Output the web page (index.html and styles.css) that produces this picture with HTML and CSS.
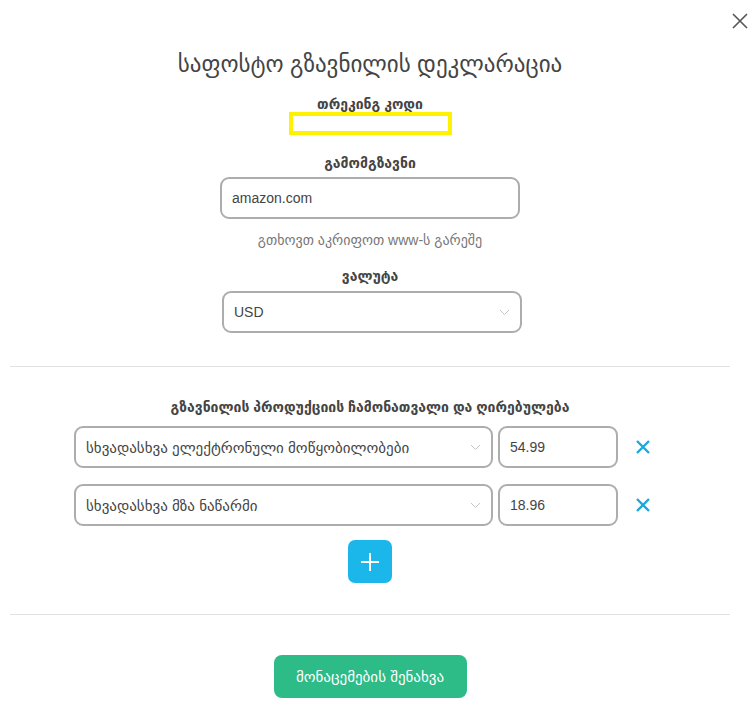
FILE: index.html
```html
<!DOCTYPE html>
<html lang="ka">
<head>
    <meta charset="UTF-8">
    <meta name="viewport" content="width=device-width, initial-scale=1.0">
    <title>საფოსტო გზავნილის დეკლარაცია</title>
    <link rel="stylesheet" href="styles.css">
</head>
<body>
    <div class="modal">
        <!-- დახურვა -->
        <button class="close-btn" type="button" aria-label="close">
            <svg width="16" height="16" viewBox="0 0 16 16">
                <path d="M1 1 L15 15 M15 1 L1 15" stroke="#555" stroke-width="1.6" fill="none"/>
            </svg>
        </button>

        <h1 class="title">საფოსტო გზავნილის დეკლარაცია</h1>

        <div class="label label-tracking">თრეკინგ კოდი</div>
        <div class="tracking-box"></div>

        <div class="label label-sender">გამომგზავნი</div>
        <input class="field field-sender" type="text" value="amazon.com">
        <div class="hint">გთხოვთ აკრიფოთ www-ს გარეშე</div>

        <div class="label label-currency">ვალუტა</div>
        <div class="select-wrap select-currency">
            <select class="field">
                <option>USD</option>
                <option>EUR</option>
                <option>GEL</option>
            </select>
            <svg class="chevron" width="11" height="7" viewBox="0 0 11 7">
                <path d="M1 1 L5.5 5.5 L10 1" stroke="#c4c4c4" stroke-width="1" fill="none"/>
            </svg>
        </div>

        <hr class="divider divider-top">

        <div class="label label-products">გზავნილის პროდუქციის ჩამონათვალი და ღირებულება</div>

        <div class="products">
            <div class="product-row">
                <div class="select-wrap">
                    <select class="field field-product">
                        <option>სხვადასხვა ელექტრონული მოწყობილობები</option>
                    </select>
                    <svg class="chevron" width="11" height="7" viewBox="0 0 11 7">
                        <path d="M1 1 L5.5 5.5 L10 1" stroke="#c4c4c4" stroke-width="1" fill="none"/>
                    </svg>
                </div>
                <input class="field field-price" type="text" value="54.99">
                <button class="remove-btn" type="button" aria-label="remove">
                    <svg width="16" height="16" viewBox="0 0 16 16">
                        <path d="M2 2 L14 14 M14 2 L2 14" stroke="#1ba8dd" stroke-width="2.4" fill="none"/>
                    </svg>
                </button>
            </div>
            <div class="product-row">
                <div class="select-wrap">
                    <select class="field field-product">
                        <option>სხვადასხვა მზა ნაწარმი</option>
                    </select>
                    <svg class="chevron" width="11" height="7" viewBox="0 0 11 7">
                        <path d="M1 1 L5.5 5.5 L10 1" stroke="#c4c4c4" stroke-width="1" fill="none"/>
                    </svg>
                </div>
                <input class="field field-price" type="text" value="18.96">
                <button class="remove-btn" type="button" aria-label="remove">
                    <svg width="16" height="16" viewBox="0 0 16 16">
                        <path d="M2 2 L14 14 M14 2 L2 14" stroke="#1ba8dd" stroke-width="2.4" fill="none"/>
                    </svg>
                </button>
            </div>
        </div>

        <button class="add-btn" type="button" aria-label="add">
            <svg width="20" height="20" viewBox="0 0 20 20">
                <path d="M10 1 V19 M1 10 H19" stroke="#fff" stroke-width="2" fill="none"/>
            </svg>
        </button>

        <hr class="divider divider-bottom">

        <button class="save-btn" type="button">მონაცემების შენახვა</button>
    </div>
</body>
</html>
```

FILE: styles.css
```css
/* საერთო */
body {
    margin: 0;
    padding: 0;
    background: #fff;
    font-family: "Liberation Sans", "DejaVu Sans", sans-serif;
    color: #444;
}

.modal {
    position: relative;
    width: 720px;
    margin: 0 10px;
    display: flex;
    flex-direction: column;
    align-items: center;
    padding-bottom: 26px;
}

.close-btn {
    position: absolute;
    top: 13px;
    right: -18px;
    padding: 0;
    border: none;
    background: none;
    cursor: pointer;
    line-height: 0;
}

.title {
    margin: 49px 0 0;
    font-size: 23px;
    line-height: 30px;
    font-weight: normal;
    color: #444;
}

.label {
    font-size: 14px;
    line-height: 16px;
    font-weight: bold;
    color: #444;
}

.label-tracking { margin-top: 17px; }
.label-sender { margin-top: 20px; }
.label-currency { margin-top: 20px; }
.label-products { margin-top: 32px; }

.tracking-box {
    width: 155px;
    height: 15px;
    border: 4px solid #fff200;
}

.field {
    box-sizing: border-box;
    height: 42px;
    border: 2px solid #adadad;
    border-radius: 9px;
    background: #fff;
    font-family: "Liberation Sans", "DejaVu Sans", sans-serif;
    font-size: 14px;
    color: #444;
    padding: 0 10px;
    outline: none;
}

.field-sender {
    width: 300px;
    margin-top: 6px;
}

.hint {
    margin-top: 13px;
    font-size: 14px;
    line-height: 16px;
    color: #777;
}

.select-wrap {
    position: relative;
}

.select-wrap select {
    -webkit-appearance: none;
    appearance: none;
    width: 100%;
}

.select-currency {
    width: 300px;
    margin-top: 7px;
    margin-left: 4px;
}

.chevron {
    position: absolute;
    right: 12px;
    top: 18px;
    pointer-events: none;
}

.divider {
    align-self: stretch;
    border: none;
    border-top: 1px solid #e2e2e2;
    margin: 0;
}

.divider-top { margin-top: 33px; }
.divider-bottom { margin-top: 31px; }

.products {
    margin-top: 11px;
    display: flex;
    flex-direction: column;
    gap: 16px;
}

.product-row {
    display: grid;
    grid-template-columns: 419px 120px 40px;
    column-gap: 5px;
    margin-left: -3px;
}

.field-product {
    font-size: 15px;
}

.field-price {
    width: 120px;
}

.remove-btn {
    border: none;
    background: none;
    padding: 0;
    cursor: pointer;
    display: flex;
    align-items: center;
    justify-content: center;
}

.add-btn {
    margin-top: 14px;
    width: 44px;
    height: 43px;
    border: none;
    border-radius: 7px;
    background: #1bb6ea;
    display: flex;
    align-items: center;
    justify-content: center;
    cursor: pointer;
}

.save-btn {
    margin-top: 40px;
    width: 193px;
    height: 43px;
    border: none;
    border-radius: 8px;
    background: #2dbb87;
    color: #fff;
    font-family: "Liberation Sans", "DejaVu Sans", sans-serif;
    font-size: 15px;
    cursor: pointer;
}
```
